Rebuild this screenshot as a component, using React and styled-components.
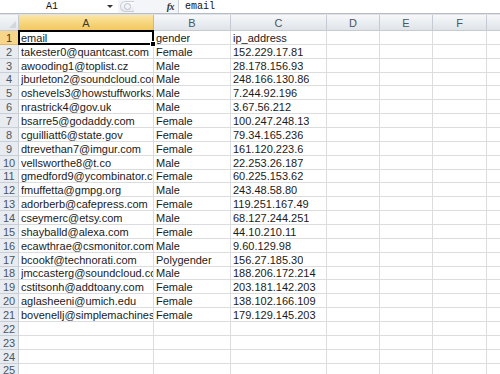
import React from "react";
import styled, { createGlobalStyle } from "styled-components";

const GlobalStyle = createGlobalStyle`
  html, body {
    margin: 0;
    padding: 0;
    background: #ffffff;
    overflow: hidden;
  }
`;

const COLS = [
  { name: "A", width: 135 },
  { name: "B", width: 77 },
  { name: "C", width: 96 },
  { name: "D", width: 53 },
  { name: "E", width: 53 },
  { name: "F", width: 54 },
  { name: "G", width: 40 },
];

const ROW_COUNT = 25;

const DATA = [
  ["email", "gender", "ip_address"],
  ["takester0@quantcast.com", "Female", "152.229.17.81"],
  ["awooding1@toplist.cz", "Male", "28.178.156.93"],
  ["jburleton2@soundcloud.com", "Male", "248.166.130.86"],
  ["oshevels3@howstuffworks.com", "Male", "7.244.92.196"],
  ["nrastrick4@gov.uk", "Male", "3.67.56.212"],
  ["bsarre5@godaddy.com", "Female", "100.247.248.13"],
  ["cguilliatt6@state.gov", "Female", "79.34.165.236"],
  ["dtrevethan7@imgur.com", "Female", "161.120.223.6"],
  ["vellsworthe8@t.co", "Male", "22.253.26.187"],
  ["gmedford9@ycombinator.com", "Female", "60.225.153.62"],
  ["fmuffetta@gmpg.org", "Male", "243.48.58.80"],
  ["adorberb@cafepress.com", "Female", "119.251.167.49"],
  ["cseymerc@etsy.com", "Male", "68.127.244.251"],
  ["shayballd@alexa.com", "Female", "44.10.210.11"],
  ["ecawthrae@csmonitor.com", "Male", "9.60.129.98"],
  ["bcookf@technorati.com", "Polygender", "156.27.185.30"],
  ["jmccasterg@soundcloud.com", "Male", "188.206.172.214"],
  ["cstitsonh@addtoany.com", "Female", "203.181.142.203"],
  ["aglasheeni@umich.edu", "Female", "138.102.166.109"],
  ["bovenellj@simplemachines.org", "Female", "179.129.145.203"],
];

const Window = styled.div`
  width: 500px;
  height: 374px;
  overflow: hidden;
  background: #ffffff;
  font-family: "Liberation Sans", Arial, sans-serif;
`;

/* formula bar */
const FormulaBar = styled.div`
  display: flex;
  height: 13px;
  background: #f3f5f8;
  border-bottom: 1px solid #b6bcc6;
`;

const NameBox = styled.div`
  position: relative;
  width: 118px;
  padding-right: 14px;
  box-sizing: border-box;
  display: flex;
  align-items: center;
  justify-content: center;
  background: #ffffff;
  font-family: "Liberation Mono", monospace;
  font-size: 10px;
  color: #111;
`;

const DropArrow = styled.span`
  position: absolute;
  right: 5px;
  top: 5px;
  width: 0;
  height: 0;
  border-left: 3px solid transparent;
  border-right: 3px solid transparent;
  border-top: 3px solid #333;
`;

const Splitter = styled.div`
  width: 60px;
  display: flex;
  align-items: center;
  justify-content: space-between;
  padding: 0 4px 0 2px;
  box-sizing: border-box;
`;

const Grip = styled.span`
  width: 14px;
  height: 11px;
  border-radius: 7px 0 0 7px;
  border: 1px solid #c9ced6;
  border-right: none;
  background: linear-gradient(#fbfcfd, #e6e9ee);
  display: flex;
  align-items: center;
  padding-left: 3px;
  box-sizing: border-box;

  &::after {
    content: "";
    width: 5px;
    height: 5px;
    border-radius: 50%;
    border: 1px solid #b9bfc8;
    background: #f3f5f8;
  }
`;

const FxButton = styled.span`
  font-family: "Liberation Serif", serif;
  font-style: italic;
  font-weight: bold;
  font-size: 10px;
  color: #333;
  letter-spacing: -0.5px;
`;

const FormulaInput = styled.div`
  flex: 1;
  background: #ffffff;
  border-left: 1px solid #c9ced6;
  padding-left: 6px;
  display: flex;
  align-items: center;
  font-family: "Liberation Mono", monospace;
  font-size: 10px;
  color: #111;
`;

/* grid */
const Sheet = styled.div`
  display: grid;
  grid-template-columns: 19px ${COLS.map((c) => `${c.width}px`).join(" ")};
  grid-template-rows: 16px repeat(${ROW_COUNT}, 13.86px);
  border-top: 1px solid #dfe3e8;
`;

const Corner = styled.div`
  position: relative;
  background: linear-gradient(#f5f7f9, #e3e7ec);
  border-right: 1px solid #c5cbd3;
  border-bottom: 1px solid #c5cbd3;
  box-sizing: border-box;

  &::after {
    content: "";
    position: absolute;
    right: 2px;
    bottom: 2px;
    border-left: 7px solid transparent;
    border-bottom: 7px solid #d2d7de;
  }
`;

const ColHeader = styled.div`
  display: flex;
  align-items: center;
  justify-content: center;
  font-size: 11px;
  color: ${(p) => (p.$active ? "#3d3a30" : "#4c5560")};
  background: ${(p) =>
    p.$active
      ? "linear-gradient(#fbe6a6, #f6d57c 55%, #f2c860)"
      : "linear-gradient(#f7f8fa, #e9ecf0 55%, #e0e4e9)"};
  border-right: 1px solid ${(p) => (p.$active ? "#e2b758" : "#c5cbd3")};
  border-bottom: 1px solid ${(p) => (p.$active ? "#e2b758" : "#c5cbd3")};
  box-sizing: border-box;
`;

const RowHeader = styled.div`
  display: flex;
  align-items: flex-end;
  justify-content: center;
  font-size: 11px;
  line-height: 12px;
  color: ${(p) => (p.$active ? "#3d3a30" : "#4c5560")};
  background: ${(p) => (p.$active ? "#f7d58a" : "#e8ecf1")};
  border-right: 1px solid #c5cbd3;
  border-bottom: 1px solid ${(p) => (p.$active ? "#e2b758" : "#c9cfd7")};
  box-sizing: border-box;
`;

const Cell = styled.div`
  display: flex;
  align-items: flex-end;
  padding-left: 2px;
  font-size: 11px;
  line-height: 12px;
  color: #1a1a1a;
  white-space: nowrap;
  overflow: hidden;
  border-right: 1px solid #dadcdd;
  border-bottom: 1px solid #dadcdd;
  box-sizing: border-box;
  min-width: 0;
`;

const SelectedCell = styled(Cell)`
  position: relative;
  overflow: visible;

  &::before {
    content: "";
    position: absolute;
    left: -1px;
    top: -1px;
    right: -1px;
    bottom: -1px;
    border: 2px solid #000;
    pointer-events: none;
  }

  &::after {
    content: "";
    position: absolute;
    right: -3px;
    bottom: -3px;
    width: 4px;
    height: 4px;
    background: #000;
    border: 1px solid #fff;
    z-index: 2;
  }
`;

const CellText = styled.span`
  display: block;
  overflow: hidden;
`;

function FormulaRow() {
  return (
    <FormulaBar>
      <NameBox>
        A1
        <DropArrow />
      </NameBox>
      <Splitter>
        <Grip />
        <FxButton>fx</FxButton>
      </Splitter>
      <FormulaInput>email</FormulaInput>
    </FormulaBar>
  );
}

export default function App() {
  const cells = [<Corner key="corner" />];
  COLS.forEach((c, i) =>
    cells.push(
      <ColHeader key={`h-${c.name}`} $active={i === 0}>
        {c.name}
      </ColHeader>
    )
  );

  for (let r = 0; r < ROW_COUNT; r++) {
    const row = DATA[r] || [];
    cells.push(
      <RowHeader key={`r-${r}`} $active={r === 0}>
        {r + 1}
      </RowHeader>
    );
    COLS.forEach((c, ci) => {
      const value = row[ci];
      const Comp = r === 0 && ci === 0 ? SelectedCell : Cell;
      cells.push(
        <Comp key={`c-${r}-${ci}`}>
          {value && <CellText>{value}</CellText>}
        </Comp>
      );
    });
  }

  return (
    <Window>
      <GlobalStyle />
      <FormulaRow />
      <Sheet>{cells}</Sheet>
    </Window>
  );
}
